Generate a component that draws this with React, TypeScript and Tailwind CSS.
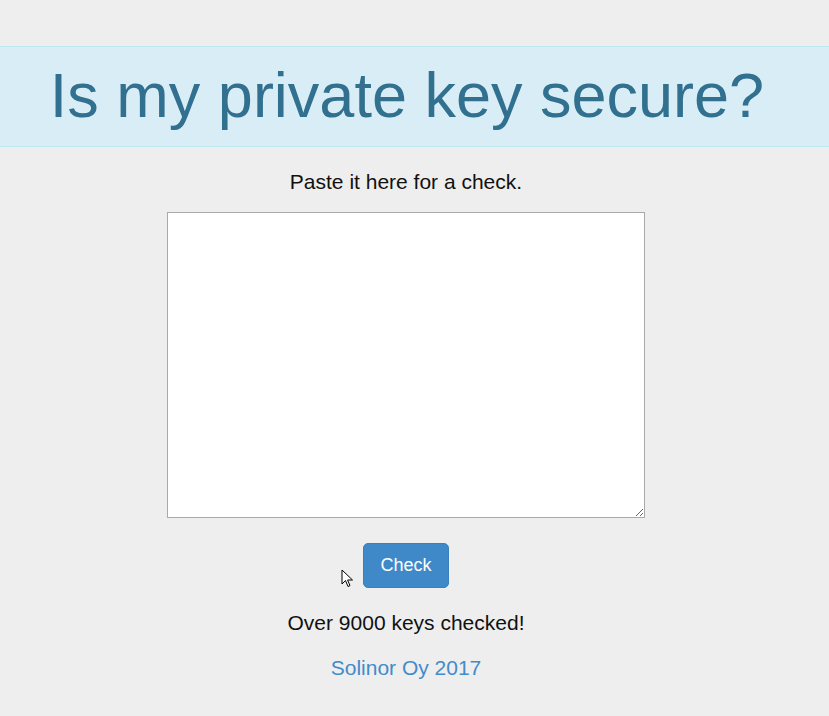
import React from "react";

export default function App() {
  return (
    <div className="min-h-[716px] bg-[#eeeeee] pt-[46px]" style={{ fontFamily: '"Liberation Sans", Arial, sans-serif' }}>
      <div className="h-[101px] border-y border-[#bce8f1] bg-[#d9edf7]">
        <div className="w-[812px] h-full flex items-center justify-center">
          <h1 className="text-[63px] leading-none text-[#31708f] pb-[3px] pl-[2px]">Is my private key secure?</h1>
        </div>
      </div>
      <div className="w-[812px] text-center">
        <p className="mt-[23px] text-[21px] leading-[24px] text-[#111]">Paste it here for a check.</p>
        <div className="flex justify-center mt-[18px]">
          <textarea className="w-[478px] h-[306px] bg-white border border-[#a9a9a9] block" />
        </div>
        <div className="flex justify-center mt-[25px]">
          <div className="relative">
            <button className="w-[86px] h-[45px] rounded-[5px] bg-[#3f89c9] text-white text-[18px] border border-[#3a80bd]">Check</button>
            <svg className="absolute left-[-22px] top-[26px]" width="13" height="19" viewBox="0 0 13 19">
              <path d="M1 1 L1 15 L4.5 11.5 L7 17.5 L9 16.6 L6.6 11 L11.5 11 Z" fill="white" stroke="black" strokeWidth="1" strokeLinejoin="round" />
            </svg>
          </div>
        </div>
        <p className="mt-[23px] text-[21px] leading-[24px] text-[#111]">Over 9000 keys checked!</p>
        <p className="mt-[21px] text-[21px] leading-[24px] text-[#428bca]">Solinor Oy 2017</p>
      </div>
    </div>
  );
}
